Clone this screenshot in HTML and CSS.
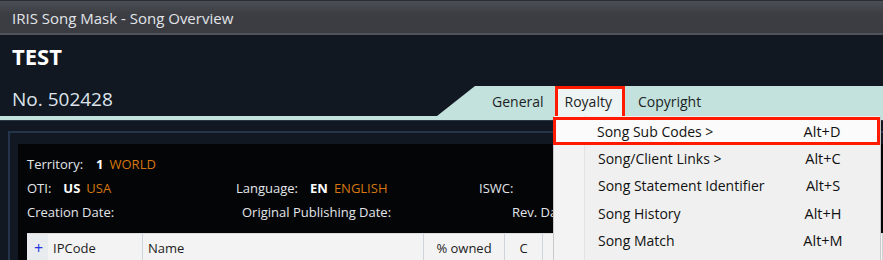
FILE: index.html
```html
<!DOCTYPE html>
<html lang="en">
<head>
  <meta charset="UTF-8" />
  <title>IRIS Song Mask - Song Overview</title>
  <link rel="stylesheet" href="styles.css">
</head>
<body>
  <div class="titlebar">IRIS Song Mask - Song Overview</div>

  <div class="header">
    <h1 class="song-title">TEST</h1>
    <div class="number-row">
      <div class="song-no">No. 502428</div>
      <div class="tabs">
        <span class="tab">General</span>
        <span class="tab active">Royalty</span>
        <span class="tab">Copyright</span>
      </div>
    </div>
    <div class="tab-line"></div>
  </div>

  <div class="content">
    <div class="frame">
      <div class="panel">
        <div class="info-row">
          <span class="cell c-territory"><span class="lbl">Territory:</span><b class="code">1</b><span class="val">WORLD</span></span>
        </div>
        <div class="info-row">
          <span class="cell c-oti"><span class="lbl">OTI:</span><b class="code">US</b><span class="val">USA</span></span>
          <span class="cell c-lang"><span class="lbl">Language:</span><b class="code">EN</b><span class="val">ENGLISH</span></span>
          <span class="cell"><span class="lbl">ISWC:</span></span>
        </div>
        <div class="info-row">
          <span class="cell c-created"><span class="lbl">Creation Date:</span></span>
          <span class="cell c-orig"><span class="lbl">Original Publishing Date:</span></span>
          <span class="cell"><span class="lbl">Rev. Date:</span></span>
        </div>

        <div class="grid-head">
          <span class="col col-add">+</span>
          <span class="col col-ip">IPCode</span>
          <span class="col col-name">Name</span>
          <span class="col col-owned">% owned</span>
          <span class="col col-c">C</span>
          <span class="col col-rest"></span>
        </div>
      </div>
    </div>
  </div>

  <div class="menu">
    <div class="menu-item selected"><span class="mi-text">Song Sub Codes &gt;</span><span class="mi-key">Alt+D</span></div>
    <div class="menu-item"><span class="mi-text">Song/Client Links &gt;</span><span class="mi-key">Alt+C</span></div>
    <div class="menu-item"><span class="mi-text">Song Statement Identifier</span><span class="mi-key">Alt+S</span></div>
    <div class="menu-item"><span class="mi-text">Song History</span><span class="mi-key">Alt+H</span></div>
    <div class="menu-item"><span class="mi-text">Song Match</span><span class="mi-key">Alt+M</span></div>
  </div>
</body>
</html>
```

FILE: styles.css
```css
body {
  margin: 0;
  background: #111821;
  font-family: "Open Sans", "Noto Sans", sans-serif;
  font-size: 13px;
  overflow: hidden;
  position: relative;
  height: 260px;
}
.titlebar {
  height: 35px;
  box-sizing: border-box;
  border-top: 1px solid #2c2e33;
  border-bottom: 2px solid #50535a;
  background: linear-gradient(#4b4e55, #3c3e44 40%, #3a3c42);
  color: #e2e4e8;
  font-size: 15px;
  padding: 7px 0 0 12px;
}
.header {
  background: #111821;
}
.song-title {
  margin: 0;
  padding: 7px 0 0 12px;
  height: 41px;
  box-sizing: border-box;
  color: #fff;
  font-size: 22px;
  font-weight: bold;
  line-height: 28px;
}
.number-row {
  display: flex;
  align-items: flex-end;
  height: 40px;
}
.song-no {
  padding: 0 0 4px 12px;
  color: #dde4ec;
  font-size: 19px;
  line-height: 26px;
}
.tabs {
  margin-left: auto;
  width: 446px;
  height: 30px;
  box-sizing: border-box;
  background: #c3e2dd;
  clip-path: polygon(38px 0, 100% 0, 100% 100%, 0 100%);
  display: flex;
  align-items: stretch;
  padding-left: 51px;
}
.tab {
  padding: 6px 9px 0 4px;
  color: #1b1f24;
  font-size: 14px;
}
.tab.active {
  background: #eef3f3;
  border: 3px solid #ff1a00;
  border-bottom: none;
  padding: 3px 10px 0 7px;
  margin-left: 2px;
  margin-right: 9px;
}
.tab-line {
  height: 4px;
  background: #c3e2dd;
  border-bottom: 1px solid #2a3544;
}
.content {
  padding: 10px 0 0 8px;
}
.frame {
  border-top: 2px solid #24344a;
  border-left: 2px solid #24344a;
  padding: 11px 0 0 8px;
  height: 117px;
}
.panel {
  background: #040507;
  height: 117px;
  padding: 8px 0 0 9px;
  box-sizing: border-box;
}
.info-row {
  display: flex;
  height: 24px;
  align-items: center;
  color: #e3e6ea;
}
.cell {
  display: flex;
  align-items: center;
  white-space: nowrap;
}
.code {
  color: #fff;
  margin-left: 12px;
}
.val {
  color: #d6770f;
  margin-left: 6px;
}
.c-territory .code { margin-left: 13px; }
.c-oti { width: 209px; }
.c-lang { width: 243px; }
.c-created { width: 215px; }
.c-orig { width: 270px; }
.grid-head {
  display: flex;
  margin-top: 9px;
  height: 27px;
  background: #f3f3f3;
  border-top: 1px solid #dcdcdc;
  color: #1c1c1c;
}
.col {
  display: flex;
  align-items: center;
  border-right: 1px solid #cfd3da;
  box-sizing: border-box;
  padding-left: 5px;
}
.col-add {
  width: 21px;
  color: #2333e0;
  font-size: 16px;
  padding-left: 7px;
  background: #e9ecef;
  border-right: none;
}
.col-ip { width: 95px; }
.col-name { width: 281px; }
.col-owned { width: 81px; justify-content: center; padding-left: 0; }
.col-c { width: 38px; justify-content: center; padding-left: 0; }
.col-rest { flex: 1; }
.menu {
  position: absolute;
  left: 553px;
  top: 116px;
  width: 328px;
  height: 144px;
  border-left: 1px solid #c9c9c9;
  border-right: 1px solid #c9c9c9;
  box-sizing: border-box;
  background: linear-gradient(90deg, #f3f3f3 30px, #e3e3e3 30px, #e3e3e3 31px, #f0f0f0 31px);
}
.menu-item {
  display: flex;
  align-items: center;
  height: 27.5px;
  color: #111;
  font-size: 14px;
  box-sizing: border-box;
  padding-left: 44px;
}
.menu-item.selected {
  border: 3px solid #ff1a00;
  padding-left: 41px;
  background: #fbfbfb;
  margin-left: -1px;
  margin-top: 1px;
  height: 28px;
  margin-bottom: -0.5px;
}
.mi-text { width: 198px; }
.mi-key { width: 54px; text-align: center; font-size: 14.5px; }
```
